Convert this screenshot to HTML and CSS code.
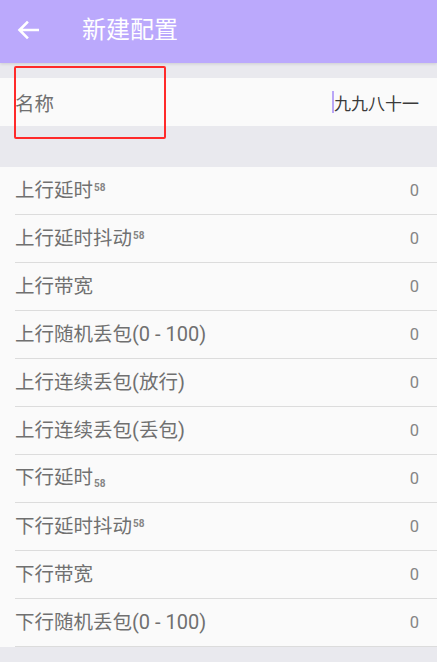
FILE: index.html
```html
<!DOCTYPE html>
<html lang="zh">
<head>
<meta charset="utf-8">
<title>新建配置</title>
<link rel="stylesheet" href="styles.css">
</head>
<body>
<header class="toolbar">
  <svg class="back" width="22" height="20" viewBox="0 0 22 20">
    <path d="M21 10H3 M10 2.5L2.5 10L10 17.5" fill="none" stroke="#fff" stroke-width="2.6" stroke-linecap="square"/>
  </svg>
  <h1 class="title">新建配置</h1>
</header>
<main class="content">
  <div class="gap-top"></div>
  <div class="name-row">
    <span class="label">名称</span>
    <span class="value"><span class="cursor"></span>九九八十一</span>
    <div class="highlight"></div>
  </div>
  <div class="gap-mid"></div>
  <ul class="list">
    <li class="row"><span class="label">上行延时<sup class="mark">58</sup></span><span class="num">0</span></li>
    <li class="row"><span class="label">上行延时抖动<sup class="mark">58</sup></span><span class="num">0</span></li>
    <li class="row"><span class="label">上行带宽</span><span class="num">0</span></li>
    <li class="row"><span class="label">上行随机丢包<span class="latin">(0 - 100)</span></span><span class="num">0</span></li>
    <li class="row"><span class="label">上行连续丢包<span class="latin">(</span>放行<span class="latin">)</span></span><span class="num">0</span></li>
    <li class="row"><span class="label">上行连续丢包<span class="latin">(</span>丢包<span class="latin">)</span></span><span class="num">0</span></li>
    <li class="row"><span class="label">下行延时<sub class="mark">58</sub></span><span class="num">0</span></li>
    <li class="row"><span class="label">下行延时抖动<sup class="mark">58</sup></span><span class="num">0</span></li>
    <li class="row"><span class="label">下行带宽</span><span class="num">0</span></li>
    <li class="row"><span class="label">下行随机丢包<span class="latin">(0 - 100)</span></span><span class="num">0</span></li>
  </ul>
</main>
</body>
</html>
```
FILE: styles.css
```css
html, body {
  margin: 0;
  padding: 0;
}
body {
  width: 437px;
  height: 662px;
  overflow: hidden;
  background: #e9e9ee;
  font-family: Roboto, "Noto Sans CJK SC", sans-serif;
}
.toolbar {
  height: 63px;
  background: #bba9fc;
  display: flex;
  align-items: center;
  padding-left: 17px;
  box-shadow: 0 1px 3px rgba(0,0,0,0.12);
  position: relative;
  z-index: 1;
}
.back {
  display: block;
  margin-top: -4px;
}
.title {
  margin: -4px 0 0 43px;
  font-size: 24px;
  font-weight: normal;
  color: #fff;
  line-height: 1;
}
.gap-top {
  height: 15px;
}
.name-row {
  height: 48px;
  background: #fafafa;
  display: flex;
  align-items: center;
  justify-content: space-between;
  padding: 0 18px 0 15px;
  position: relative;
}
.name-row .label {
  font-size: 19.5px;
  color: #707070;
}
.value {
  font-size: 17px;
  color: #3a3a3a;
  display: flex;
  align-items: center;
}
.cursor {
  display: inline-block;
  width: 2px;
  height: 22px;
  background: #b9a6f7;
}
.highlight {
  position: absolute;
  left: 14px;
  top: -12px;
  width: 148px;
  height: 69px;
  border: 2px solid #ff2a2a;
  border-radius: 2px;
}
.gap-mid {
  height: 41px;
}
.list {
  list-style: none;
  margin: 0;
  padding: 0 0 0 15px;
  background: #fafafa;
}
.row {
  height: 47px;
  border-bottom: 1px solid #dcdcdc;
  display: flex;
  align-items: center;
  justify-content: space-between;
  padding-right: 18px;
}
.row .label {
  font-size: 19.5px;
  color: #707070;
  line-height: 1;
}
.latin {
  font-family: Roboto, sans-serif;
  font-size: 20px;
}
.num {
  font-family: Roboto, sans-serif;
  font-size: 16.5px;
  color: #858585;
}
.mark {
  font-family: Roboto, sans-serif;
  font-size: 10px;
  font-weight: bold;
  color: #858585;
  margin-left: 1px;
}
sup.mark {
  vertical-align: 6px;
}
sub.mark {
  vertical-align: -3px;
}
```
